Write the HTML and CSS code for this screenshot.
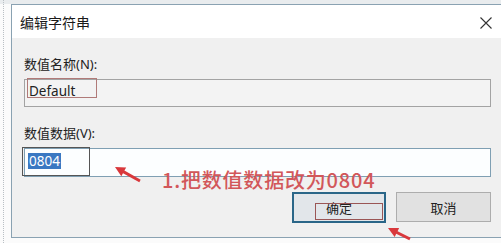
FILE: index.html
```html
<!DOCTYPE html>
<html lang="zh-CN">
<head>
<meta charset="utf-8">
<title>编辑字符串</title>
<link rel="stylesheet" href="styles.css">
</head>
<body>
<div class="page">
  <div class="dialog">
    <div class="titlebar">
      <span class="title">编辑字符串</span>
      <svg class="close" width="12" height="12" viewBox="0 0 12 12"><path d="M0.5 0.5 L11.5 11.5 M11.5 0.5 L0.5 11.5" stroke="#333" stroke-width="1.1" fill="none"/></svg>
    </div>
    <div class="body">
      <div class="label label-first">数值名称(N):</div>
      <div class="field field-readonly"><span class="value">Default</span></div>
      <div class="label label-second">数值数据(V):</div>
      <div class="field field-edit"><span class="value selected">0804</span></div>
      <div class="buttons">
        <div class="btn btn-default">确定</div>
        <div class="btn">取消</div>
      </div>
    </div>
  </div>
</div>

<svg class="marks" width="501" height="243" viewBox="0 0 501 243">
  <rect x="27.5" y="78.5" width="69" height="19" fill="none" stroke="#b07a78" stroke-width="1"/>
  <rect x="22.5" y="147.5" width="67" height="28" fill="none" stroke="#555" stroke-width="1"/>
  <rect x="315.5" y="203.5" width="67" height="16" fill="none" stroke="#9a5656" stroke-width="1"/>
  <polygon points="115,167 126.2,167.6 124.4,170.6 140.7,179.7 139.3,182.3 123,173.2 121.3,176.2" fill="#d9383c"/>
  <polygon points="388,228 399.1,228 397.6,231.2 410.7,237.7 409.3,240.3 396.2,233.8 394.7,236.9" fill="#d9383c"/>
</svg>
<div class="note">1.把数值数据改为0804</div>
</body>
</html>
```
FILE: styles.css
```css
html, body {
  margin: 0;
  padding: 0;
}
body {
  width: 501px;
  height: 243px;
  overflow: hidden;
  position: relative;
  background: #fbfbfb;
  font-family: "Noto Sans", "Noto Sans CJK SC", sans-serif;
  color: #222;
}
.page {
  padding: 4px 0 0 11px;
  background: linear-gradient(#e9ecee, #e9ecee) top left / 100% 4px no-repeat;
  position: relative;
}
.page::before {
  content: "";
  position: absolute;
  left: 3px;
  top: 0;
  height: 243px;
  border-left: 1px dotted #b9bfc4;
}
.dialog {
  width: 510px;
  box-sizing: border-box;
  border: 1px solid #8aa2b2;
  background: #f0f0f0;
}
.titlebar {
  height: 33px;
  background: #fff;
  display: flex;
  align-items: center;
  padding-left: 8px;
  position: relative;
}
.title {
  font-size: 14px;
  color: #1a1a1a;
  font-family: "Noto Sans CJK SC", sans-serif;
  margin-top: 1px;
}
.close {
  position: absolute;
  left: 468px;
  top: 12px;
}
.body {
  padding: 18px 29px 14px 12px;
}
.label {
  font-size: 13px;
  line-height: 17px;
  height: 17px;
  color: #222;
}
.label-first {
  margin-bottom: 6px;
}
.label-second {
  margin-top: 18px;
  margin-bottom: 6px;
}
.field {
  box-sizing: border-box;
  display: flex;
  align-items: flex-start;
  padding-left: 4px;
  font-size: 13.5px;
}
.field-readonly {
  height: 28px;
  border: 1px solid #a3a3a3;
  background: #f3f3f3;
  padding-top: 3px;
}
.field-edit {
  height: 29px;
  border: 1px solid #7f9fb3;
  background: #fcfeff;
  padding-top: 4px;
}
.value {
  line-height: 16px;
  color: #222;
}
.selected {
  background: #3a78c2;
  color: #fff;
  padding: 0 1px;
  margin-left: -1px;
}
.buttons {
  display: flex;
  justify-content: flex-end;
  gap: 10px;
  margin-top: 15px;
}
.btn {
  width: 95px;
  height: 30px;
  box-sizing: border-box;
  border: 1px solid #adadad;
  background: #e1e1e1;
  display: flex;
  align-items: center;
  justify-content: center;
  font-size: 13px;
  color: #222;
  font-family: "Noto Sans CJK SC", sans-serif;
}
.btn-default {
  width: 94px;
  height: 31px;
  border: 2px solid #2a6688;
  background: #e2e6ea;
}
.marks {
  position: absolute;
  left: 0;
  top: 0;
  pointer-events: none;
}
.note {
  position: absolute;
  left: 162px;
  top: 169px;
  font-size: 20px;
  line-height: 22px;
  letter-spacing: 0.8px;
  font-weight: 500;
  color: #d2575a;
  font-family: "Noto Sans CJK SC", sans-serif;
  white-space: nowrap;
}
```
